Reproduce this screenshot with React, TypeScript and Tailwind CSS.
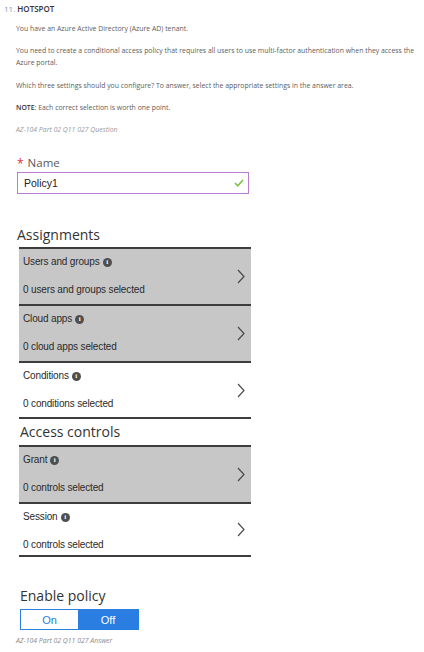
import React from "react";

const Info = () => (
  <span className="inline-flex items-center justify-center w-[9px] h-[9px] rounded-full bg-[#4f4f4f] text-white text-[7px] font-bold leading-none ml-[3px] align-middle" style={{ fontFamily: "'Liberation Serif', serif" }}>
    i
  </span>
);

const Chevron = () => (
  <svg width="8" height="15" viewBox="0 0 8 15" className="shrink-0">
    <polyline points="1,1 7,7.5 1,14" fill="none" stroke="#4a4a4a" strokeWidth="1.2" />
  </svg>
);

function Row({ label, sub, grey, h, bottom }: { label: string; sub: string; grey: boolean; h: string; bottom?: boolean }) {
  return (
    <div
      className={`flex items-center justify-between border-t-2 border-[#3d3d3d] pl-[4px] pr-[6px] ${grey ? "bg-[#c7c7c7]" : "bg-white"} ${bottom ? "border-b-2" : ""} ${h}`}
    >
      <div className="flex flex-col self-start pt-[7px] text-[10px] text-[#2a2a2a] tracking-[-0.15px]" style={{ fontFamily: "'Liberation Sans', Arial, sans-serif" }}>
        <div className="leading-[12px] flex items-center">
          {label}
          <Info />
        </div>
        <div className="leading-[12px] mt-[16px]">{sub}</div>
      </div>
      <Chevron />
    </div>
  );
}

export default function App() {
  const q = { fontFamily: "'Open Sans', 'Noto Sans', sans-serif" };
  const f = { fontFamily: "'Open Sans', 'Noto Sans', sans-serif" };
  return (
    <div className="w-[424px] h-[652px] bg-white overflow-hidden">
      <div style={q}>
        <div className="ml-[4px] mt-[3px] h-[11px] leading-[11px] text-[8px]">
          <span className="text-[#7a9cc0]">11. </span>
          <span className="font-semibold text-[#333]">HOTSPOT</span>
        </div>
        <div className="ml-[16px] text-[6.9px] text-[#5c5c5c] whitespace-nowrap">
          <p className="mt-[9px] leading-[12px]">You have an Azure Active Directory (Azure AD) tenant.</p>
          <p className="mt-[10px] leading-[11.7px]">
            You need to create a conditional access policy that requires all users to use multi-factor authentication when they access the
            <br />
            Azure portal.
          </p>
          <p className="mt-[12px] leading-[12px]">Which three settings should you configure? To answer, select the appropriate settings in the answer area.</p>
          <p className="mt-[10px] leading-[12px]">
            <span className="font-semibold text-[#333]">NOTE</span>: Each correct selection is worth one point.
          </p>
          <p className="mt-[10px] leading-[12px] italic text-[#9a9a9a]">AZ-104 Part 02 Q11 027 Question</p>
        </div>
      </div>

      <div className="ml-[17px] w-[232px]" style={f}>
        <div className="mt-[20px] h-[14px] leading-[14px] text-[11.5px] text-[#5a5a5a] flex items-center">
          <span className="text-[#e0303a] text-[12px] mr-[4px] leading-none mt-[2px]">*</span>
          Name
        </div>
        <div className="mt-[2px] h-[22px] border-[1.5px] border-[#b87ed4] flex items-center justify-between pl-[6px] pr-[4px]">
          <span className="text-[10.5px] text-[#222]" style={{ fontFamily: "'Liberation Sans', Arial, sans-serif" }}>Policy1</span>
          <svg width="10" height="8" viewBox="0 0 10 8">
            <polyline points="1,4 3.8,6.8 9,1" fill="none" stroke="#7cc242" strokeWidth="1.6" />
          </svg>
        </div>
        <div className="mt-[30px] h-[22px] leading-[22px] text-[14px] text-[#333]">Assignments</div>
      </div>

      <div className="ml-[19px] w-[232px] mt-[1px]">
        <Row label="Users and groups" sub="0 users and groups selected" grey h="h-[57px]" />
        <Row label="Cloud apps" sub="0 cloud apps selected" grey h="h-[57px]" />
        <Row label="Conditions" sub="0 conditions selected" grey={false} h="h-[58px]" bottom />
        <div className="h-[26px] leading-[26px] text-[14px] text-[#333] pl-[1px]" style={f}>Access controls</div>
        <Row label="Grant" sub="0 controls selected" grey h="h-[57px]" />
        <Row label="Session" sub="0 controls selected" grey={false} h="h-[55px]" bottom />
      </div>

      <div className="ml-[20px]" style={f}>
        <div className="mt-[28px] h-[22px] leading-[22px] text-[14px] text-[#333]">Enable policy</div>
        <div className="mt-[2px] flex w-[119px] h-[21px] border-[1.5px] border-[#2a7de1] text-[11px]" style={{ fontFamily: "'Liberation Sans', Arial, sans-serif" }}>
          <div className="w-[57px] flex items-center justify-center text-[#2a7de1] bg-white">On</div>
          <div className="flex-1 flex items-center justify-center text-white bg-[#2a7de1]">Off</div>
        </div>
      </div>
      <div className="ml-[16px] mt-[5px] leading-[12px] text-[6.9px] italic text-[#8a8a8a]" style={q}>
        AZ-104 Part 02 Q11 027 Answer
      </div>
    </div>
  );
}
